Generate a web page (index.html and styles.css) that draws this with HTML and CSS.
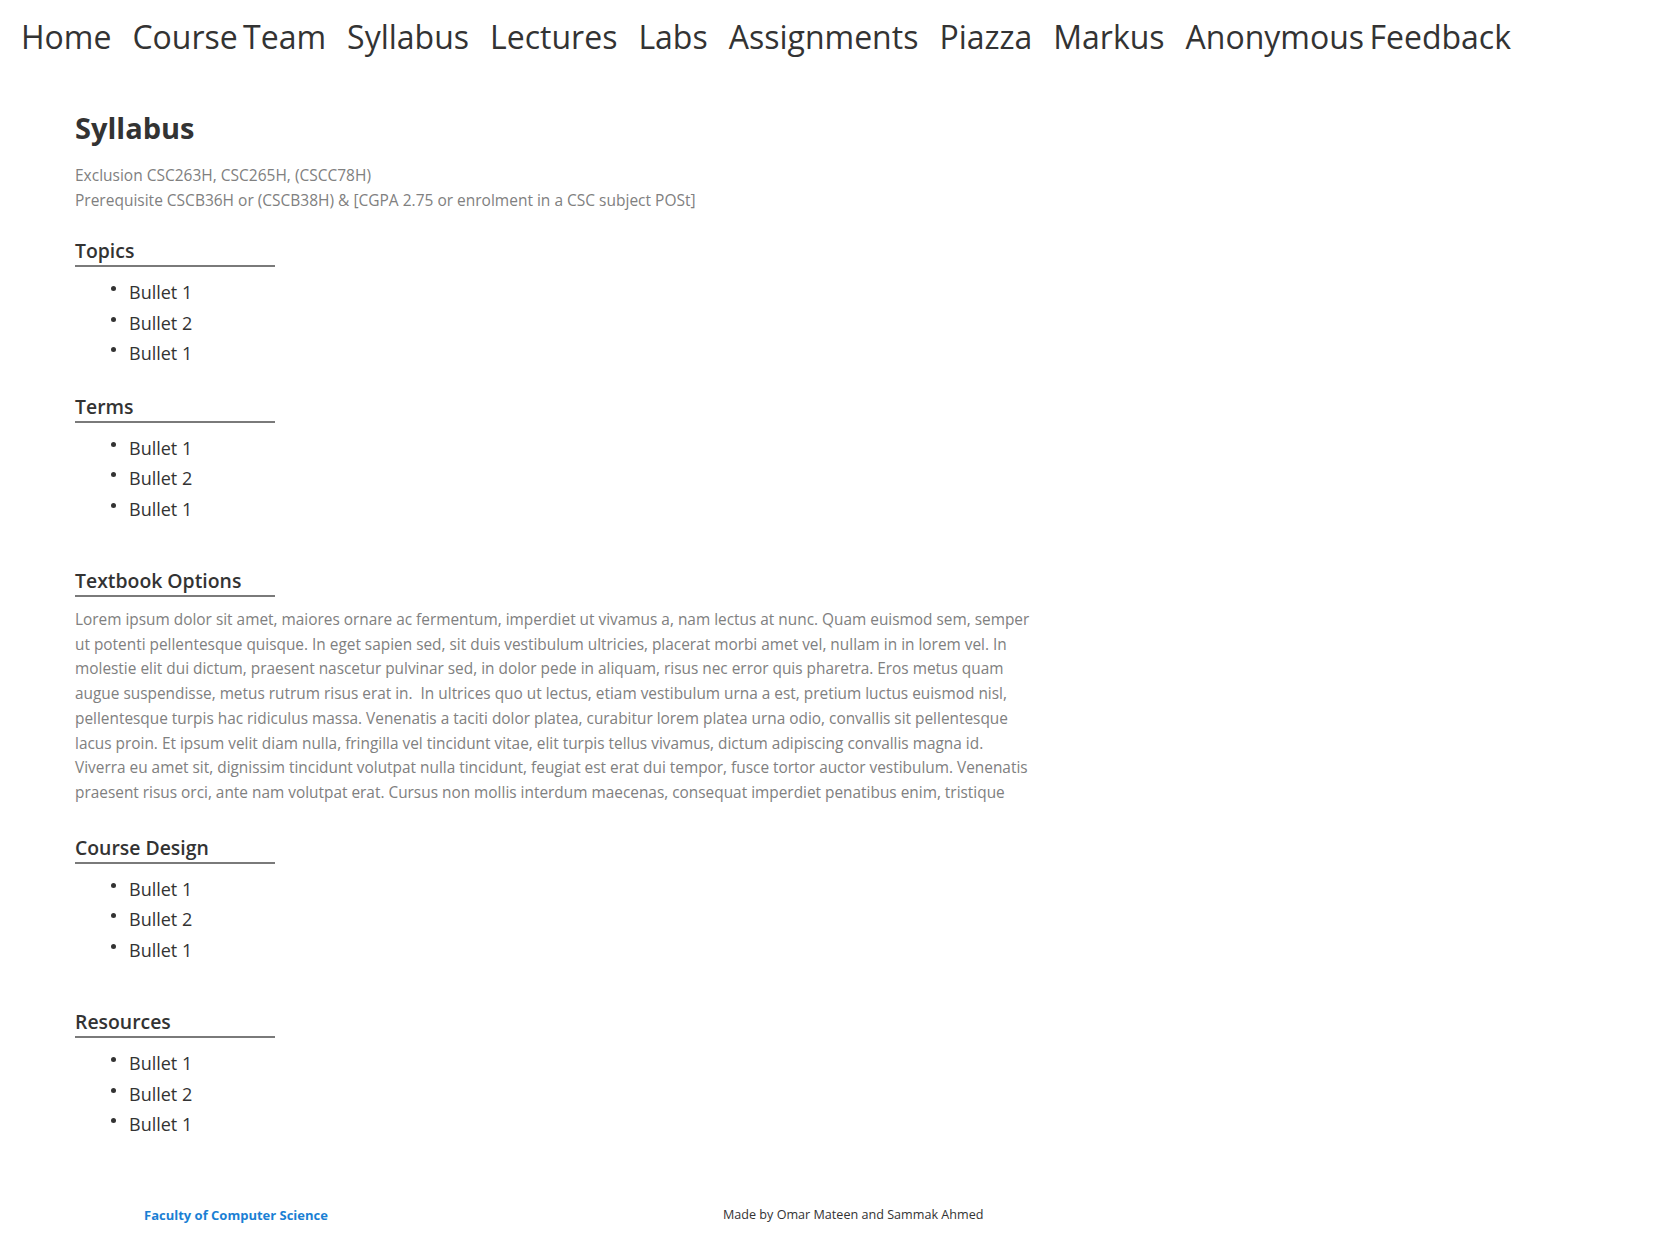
FILE: index.html
```html
<!DOCTYPE html>
<html lang="en">
<head>
<meta charset="utf-8">
<title>Syllabus</title>
<link rel="stylesheet" href="styles.css">
</head>
<body>
<nav class="topnav">
  <a class="nav-link" href="#">Home</a>
  <a class="nav-link" href="#">Course Team</a>
  <a class="nav-link" href="#">Syllabus</a>
  <a class="nav-link" href="#">Lectures</a>
  <a class="nav-link" href="#">Labs</a>
  <a class="nav-link" href="#">Assignments</a>
  <a class="nav-link" href="#">Piazza</a>
  <a class="nav-link" href="#">Markus</a>
  <a class="nav-link" href="#">Anonymous Feedback</a>
</nav>
<main class="content">
  <h1 class="page-title">Syllabus</h1>
  <p class="meta">Exclusion CSC263H, CSC265H, (CSCC78H)<br>Prerequisite CSCB36H or (CSCB38H) &amp; [CGPA 2.75 or enrolment in a CSC subject POSt]</p>

  <section class="block">
    <h2 class="section-title">Topics</h2>
    <ul class="bullets">
      <li>Bullet 1</li>
      <li>Bullet 2</li>
      <li>Bullet 1</li>
    </ul>
  </section>

  <section class="block">
    <h2 class="section-title">Terms</h2>
    <ul class="bullets">
      <li>Bullet 1</li>
      <li>Bullet 2</li>
      <li>Bullet 1</li>
    </ul>
  </section>

  <section class="block block-wide">
    <h2 class="section-title">Textbook Options</h2>
    <p class="para">Lorem ipsum dolor sit amet, maiores ornare ac fermentum, imperdiet ut vivamus a, nam lectus at nunc. Quam euismod sem, semper<br>ut potenti pellentesque quisque. In eget sapien sed, sit duis vestibulum ultricies, placerat morbi amet vel, nullam in in lorem vel. In<br>molestie elit dui dictum, praesent nascetur pulvinar sed, in dolor pede in aliquam, risus nec error quis pharetra. Eros metus quam<br>augue suspendisse, metus rutrum risus erat in.&nbsp; In ultrices quo ut lectus, etiam vestibulum urna a est, pretium luctus euismod nisl,<br>pellentesque turpis hac ridiculus massa. Venenatis a taciti dolor platea, curabitur lorem platea urna odio, convallis sit pellentesque<br>lacus proin. Et ipsum velit diam nulla, fringilla vel tincidunt vitae, elit turpis tellus vivamus, dictum adipiscing convallis magna id.<br>Viverra eu amet sit, dignissim tincidunt volutpat nulla tincidunt, feugiat est erat dui tempor, fusce tortor auctor vestibulum. Venenatis<br>praesent risus orci, ante nam volutpat erat. Cursus non mollis interdum maecenas, consequat imperdiet penatibus enim, tristique</p>
  </section>

  <section class="block block-after-text">
    <h2 class="section-title">Course Design</h2>
    <ul class="bullets">
      <li>Bullet 1</li>
      <li>Bullet 2</li>
      <li>Bullet 1</li>
    </ul>
  </section>

  <section class="block block-wide">
    <h2 class="section-title">Resources</h2>
    <ul class="bullets">
      <li>Bullet 1</li>
      <li>Bullet 2</li>
      <li>Bullet 1</li>
    </ul>
  </section>
</main>
<footer class="footer">
  <a class="footer-link" href="#">Faculty of Computer Science</a>
  <span class="credits">Made by Omar Mateen and Sammak Ahmed</span>
</footer>
</body>
</html>
```
FILE: styles.css
```css
* { box-sizing: border-box; }
body {
  margin: 0;
  background: #fff;
  font-family: "Open Sans", "Liberation Sans", sans-serif;
  color: #333;
}
.topnav {
  display: flex;
  gap: 21px;
  padding: 14px 21px 0;
  height: 76px;
}
.nav-link {
  font-size: 32px;
  color: #333;
  text-decoration: none;
  line-height: 46px;
  word-spacing: -3px;
}
.content {
  padding: 32px 0 0 75px;
  width: 1100px;
}
.page-title {
  margin: 0;
  font-size: 29px;
  font-weight: 700;
  color: #333;
  line-height: 40px;
}
.meta {
  margin: 15px 0 0;
  font-size: 15.5px;
  line-height: 25px;
  color: #808080;
}
.block { margin-top: 24px; }
.block-wide { margin-top: 43px; }
.block-after-text { margin-top: 28px; }
.section-title {
  margin: 0;
  width: 200px;
  font-size: 19.4px;
  font-weight: 600;
  line-height: 28px;
  color: #333;
  border-bottom: 2px solid #7a7a7a;
}
.bullets {
  margin: 10px 0 0;
  padding-left: 54px;
  font-size: 18px;
  line-height: 30.5px;
  color: #333;
  list-style: none;
}
.bullets li::before {
  content: "";
  display: inline-block;
  width: 5px;
  height: 5px;
  border-radius: 50%;
  background: #333;
  margin-left: -18px;
  margin-right: 13px;
  vertical-align: 8px;
}
.para {
  margin: 11px 0 0;
  font-size: 15.4px;
  line-height: 24.7px;
  color: #808080;
  white-space: nowrap;
}
.footer {
  display: flex;
  align-items: center;
  padding: 66px 0 20px 144px;
}
.footer-link {
  font-size: 13px;
  font-weight: 700;
  color: #1a7fd4;
  text-decoration: none;
  width: 579px;
}
.credits {
  font-size: 12.6px;
  color: #333;
}
```
